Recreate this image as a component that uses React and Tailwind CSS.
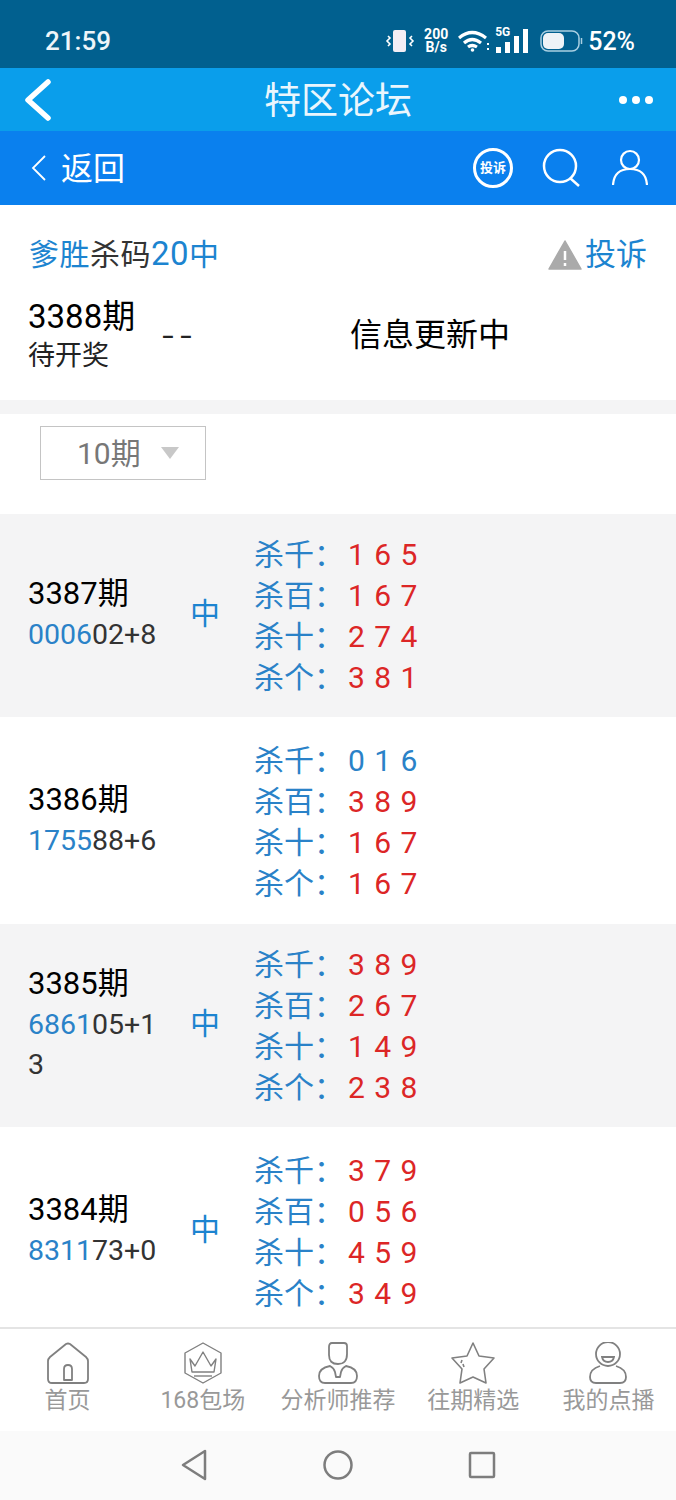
import React from "react";

const FONT = { fontFamily: 'Roboto, "Noto Sans CJK SC", sans-serif' };

const rows = [
  { issue: "3387期", hit: "0006", rest: "02+8", win: true, bg: "mb-[2px] h-[203px] bg-[#f4f4f5]",
    lines: [["杀千", "1 6 5"], ["杀百", "1 6 7"], ["杀十", "2 7 4"], ["杀个", "3 8 1"]] },
  { issue: "3386期", hit: "1755", rest: "88+6", win: false, bg: "h-[205px] bg-white", blueFirst: true,
    lines: [["杀千", "0 1 6"], ["杀百", "3 8 9"], ["杀十", "1 6 7"], ["杀个", "1 6 7"]] },
  { issue: "3385期", hit: "6861", rest: "05+13", win: true, bg: "mb-[2px] h-[203px] bg-[#f4f4f5]",
    lines: [["杀千", "3 8 9"], ["杀百", "2 6 7"], ["杀十", "1 4 9"], ["杀个", "2 3 8"]] },
  { issue: "3384期", hit: "8311", rest: "73+0", win: true, bg: "h-[205px] bg-white",
    lines: [["杀千", "3 7 9"], ["杀百", "0 5 6"], ["杀十", "4 5 9"], ["杀个", "3 4 9"]] },
];

const HomeIcon = () => (
  <svg width="42" height="42" viewBox="0 0 42 42" fill="none" stroke="#808080" strokeWidth="1.8" strokeLinejoin="round">
    <path d="M3 15 L19 2 Q21 1 23 2 L39 15 Q41 17 41 19 V37 Q41 41 37 41 H5 Q1 41 1 37 V19 Q1 17 3 15 Z" />
    <path d="M17 38 V27 Q17 23 21 23 Q25 23 25 27 V38 Z" />
  </svg>
);

const CrownIcon = () => (
  <svg width="40" height="42" viewBox="0 0 40 42" fill="none" stroke="#808080" strokeWidth="1.4" strokeLinejoin="round">
    <path d="M20 1 L38 11 V31 L20 41 L2 31 V11 Z" />
    <path d="M7 17 L12 24 L20 10 L28 24 L33 17 L31 30 H9 Z" />
    <path d="M11 34 H29" />
  </svg>
);

const AnalystIcon = () => (
  <svg width="40" height="42" viewBox="0 0 40 42" fill="none" stroke="#808080" strokeWidth="1.8" strokeLinejoin="round">
    <path d="M14 1 H26 Q29 1 29 4 V12 Q29 22 20 22 Q11 22 11 13 V5 Q11 1 14 1 Z" />
    <path d="M12 24 Q1 26 1 34 Q1 41 7 41 H33 Q39 41 39 34 Q39 26 28 24 Q24 26 23 30 L22 35 H18 L17 30 Q16 26 12 24 Z" />
  </svg>
);

const StarIcon = () => (
  <svg width="44" height="42" viewBox="0 0 44 42" fill="none" stroke="#808080" strokeWidth="1.6" strokeLinejoin="round">
    <path d="M22 1 L28 14 L43 16 L33 27 L35 41 L22 35 L9 41 L11 27 L1 16 L16 14 Z" />
    <path d="M11 18 L10 21 M12 22 L13 25" />
  </svg>
);

const ProfileIcon = () => (
  <svg width="38" height="42" viewBox="0 0 38 42" fill="none" stroke="#808080" strokeWidth="1.8">
    <ellipse cx="19" cy="12" rx="12" ry="12" />
    <path d="M13 15 H25 Q24 20 19 20 Q14 20 13 15 Z" />
    <path d="M11 24 Q1 27 1 35 Q1 41 7 41 H31 Q37 41 37 35 Q37 27 27 24" />
  </svg>
);

const tabs = [
  { label: "首页", icon: <HomeIcon /> },
  { label: "168包场", icon: <CrownIcon /> },
  { label: "分析师推荐", icon: <AnalystIcon /> },
  { label: "往期精选", icon: <StarIcon /> },
  { label: "我的点播", icon: <ProfileIcon /> },
];

const StatusIcons = () => (
  <div className="flex items-center text-white">
    <svg width="30" height="24" viewBox="0 0 30 24" fill="none" className="mr-[8px]">
      <rect x="8" y="1" width="13" height="22" rx="2" fill="#f3eef5" />
      <path d="M3 7 L5 9 L2 12 L5 15 L3 17 M27 7 L25 9 L28 12 L25 15 L27 17" stroke="#fff" strokeWidth="1.6" />
    </svg>
    <div className="mr-[9px] flex w-[26px] flex-col items-center text-[14px] font-bold leading-[13px]">
      <span>200</span>
      <span>B/s</span>
    </div>
    <svg width="32" height="24" viewBox="0 0 32 24" fill="none" stroke="#fff" strokeWidth="3.200" className="mr-[5px]">
      <path d="M1 9 Q14 -2 28 9" />
      <path d="M6 14 Q14 7 23 14" />
      <path d="M10 18 Q14 15 19 18" />
      <circle cx="14.500" cy="21" r="1.800" fill="#fff" stroke="none" />
      <path d="M30 14 V16 M30 19 V21" strokeWidth="2" />
    </svg>
    <div className="relative mr-[10px] h-[26px] w-[35px]">
      <span className="absolute left-0 top-[-2px] text-[12px] font-bold leading-[12px]">5G</span>
      <svg width="35" height="26" viewBox="0 0 35 26" fill="#fff" className="absolute left-0 top-0">
        <rect x="1" y="19" width="5" height="6" />
        <rect x="10" y="14" width="5" height="11" />
        <rect x="19" y="8" width="5" height="17" />
        <rect x="28" y="1" width="5" height="24" />
      </svg>
    </div>
    <svg width="44" height="24" viewBox="0 0 44 24" fill="none" className="mr-[4px]">
      <rect x="1" y="2" width="38" height="20" rx="7" stroke="#a9cfe2" strokeWidth="1.5" />
      <rect x="3" y="4" width="21" height="16" rx="5" fill="#eef3f7" />
      <path d="M41.500 9 V15" stroke="#a9cfe2" strokeWidth="1.5" />
    </svg>
    <span className="text-[25px] font-medium leading-none">52%</span>
  </div>
);

function App() {
  return (
    <div style={FONT} className="flex h-[1500px] w-[676px] flex-col overflow-hidden bg-white">
      {/* status bar */}
      <div className="flex h-[68px] shrink-0 items-center justify-between bg-[#01608f] pl-[45px] pr-[41px] pt-[14px]">
        <span className="text-[26px] font-medium leading-none text-[#eef5f9]">21:59</span>
        <StatusIcons />
      </div>

      {/* title bar */}
      <div className="flex h-[63px] shrink-0 items-center justify-between bg-[#0a9eeb] pl-[24px] pr-[23px]">
        <svg width="28" height="42" viewBox="0 0 28 42" fill="none" stroke="#fff" strokeWidth="5.500" strokeLinecap="round" strokeLinejoin="round">
          <path d="M24 3 L4 21 L24 39" />
        </svg>
        <span className="pl-[5px] pt-[3px] text-[37px] leading-none text-[#eaf6fd]">特区论坛</span>
        <div className="flex gap-[5px]">
          <span className="h-[8px] w-[8px] rounded-full bg-white" />
          <span className="h-[8px] w-[8px] rounded-full bg-white" />
          <span className="h-[8px] w-[8px] rounded-full bg-white" />
        </div>
      </div>

      {/* sub nav */}
      <div className="flex h-[74px] shrink-0 items-center justify-between bg-[#0a80ee] pl-[31px] pr-[28px]">
        <div className="flex items-center gap-[14px]">
          <svg width="16" height="26" viewBox="0 0 16 26" fill="none" stroke="#fff" strokeWidth="1.800">
            <path d="M14 1 L2 13 L14 25" />
          </svg>
          <span className="pt-[2px] text-[32px] leading-none text-white">返回</span>
        </div>
        <div className="flex items-center">
          <div className="flex h-[40px] w-[40px] items-center justify-center rounded-full border-[3px] border-white text-[13px] font-bold text-white">
            投诉
          </div>
          <svg width="40" height="40" viewBox="0 0 40 40" fill="none" stroke="#fff" strokeWidth="2.500" className="ml-[29px]">
            <circle cx="18" cy="18" r="16" />
            <path d="M28 30 L37 38" />
          </svg>
          <svg width="36" height="38" viewBox="0 0 36 38" fill="none" stroke="#fff" strokeWidth="2.200" className="ml-[30px]">
            <circle cx="18" cy="11" r="9" />
            <path d="M1 36 Q2 20 18 20 Q34 20 35 36" />
          </svg>
        </div>
      </div>

      {/* content */}
      <main className="min-h-0 flex-1 overflow-hidden">
        <div className="h-[195px]">
          <div className="flex items-center justify-between pl-[29px] pr-[29px] pt-[31px]">
            <div className="text-[30px] leading-[36px] tracking-[0.5px] text-[#1c84d0]">
              爹胜<span className="text-[#333]">杀码</span>
              <span className="text-[33px]">20</span>中
            </div>
            <div className="flex items-center gap-[3px] text-[31px] leading-[36px] text-[#1c84d0]">
              <svg width="34" height="30" viewBox="0 0 34 30">
                <path d="M17 1 L33 29 H1 Z" fill="#aaa" stroke="#aaa" strokeWidth="1.500" strokeLinejoin="round" />
                <path d="M17 11 V20 M17 23 V26" stroke="#fff" strokeWidth="2.500" />
              </svg>
              投诉
            </div>
          </div>
          <div className="mt-[25px] flex pl-[28px]">
            <div className="w-[134px] text-black">
              <div className="text-[33px] leading-[38px]">3388期</div>
              <div className="text-[27px] leading-[40px] text-[#222]">待开奖</div>
            </div>
            <div className="flex h-[74px] w-[188px] items-center text-[42px] font-light tracking-[6px] text-[#222]">--</div>
            <div className="flex h-[74px] items-center text-[32px] text-black">信息更新中</div>
          </div>
        </div>
        <div className="h-[14px] bg-[#f4f4f5]" />

        <div className="h-[100px] pl-[40px] pt-[12px]">
          <div className="flex h-[54px] w-[166px] items-center border border-[#c4c4c4] pl-[36px]">
            <span className="pt-[1px] text-[30px] leading-none text-[#777]">10期</span>
            <span className="ml-[20px] h-0 w-0 border-x-[9px] border-t-[12px] border-x-transparent border-t-[#c8c8c8]" />
          </div>
        </div>

        {rows.map((row) => (
          <div key={row.issue} className={`flex items-center pl-[28px] ${row.bg}`}>
            <div className="w-[134px] pb-[1px]">
              <div className="text-[31px] leading-[38px] text-black">{row.issue}</div>
              <div className="mt-[2px] break-all text-[28.500px] leading-[40px] text-[#333]">
                <span className="text-[#2a82c8]">{row.hit}</span>
                {row.rest}
              </div>
            </div>
            <div className="w-[92px] pb-[4px] pl-[28px] text-[30px] leading-none text-[#1c84d0]">{row.win ? "中" : ""}</div>
            <div className="text-[30px] leading-[41px]">
              {row.lines.map(([label, nums], i) => (
                <div key={label} className="flex">
                  <span className="w-[94px] whitespace-nowrap text-[#2a82c8]">{label}：</span>
                  <span className={`whitespace-pre tracking-[1px] ${row.blueFirst && i === 0 ? "text-[#2a82c8]" : "text-[#dc2626]"}`}>{nums}</span>
                </div>
              ))}
            </div>
          </div>
        ))}
      </main>

      {/* tab bar */}
      <nav className="grid h-[104px] shrink-0 grid-cols-5 border-t-2 border-[#e4e4e4] bg-white pt-[12px]">
        {tabs.map((tab) => (
          <div key={tab.label} className="flex flex-col items-center">
            <div className="flex h-[44px] items-center">{tab.icon}</div>
            <span className="mt-[1px] whitespace-nowrap text-[23px] leading-[30px] text-[#999]">{tab.label}</span>
          </div>
        ))}
      </nav>

      {/* android nav */}
      <div className="flex h-[69px] shrink-0 items-center justify-center gap-[115px] bg-[#fafafa] pb-[2px]">
        <svg width="28" height="32" viewBox="0 0 28 32" fill="none" stroke="#7d7d7d" strokeWidth="2.500" strokeLinejoin="round">
          <path d="M25 2 V30 L3 16 Z" />
        </svg>
        <svg width="30" height="30" viewBox="0 0 30 30" fill="none" stroke="#7d7d7d" strokeWidth="2.500">
          <circle cx="15" cy="15" r="13.500" />
        </svg>
        <svg width="28" height="28" viewBox="0 0 28 28" fill="none" stroke="#7d7d7d" strokeWidth="2.500" strokeLinejoin="round">
          <rect x="2" y="2" width="24" height="24" rx="1" />
        </svg>
      </div>
    </div>
  );
}

export default App;
